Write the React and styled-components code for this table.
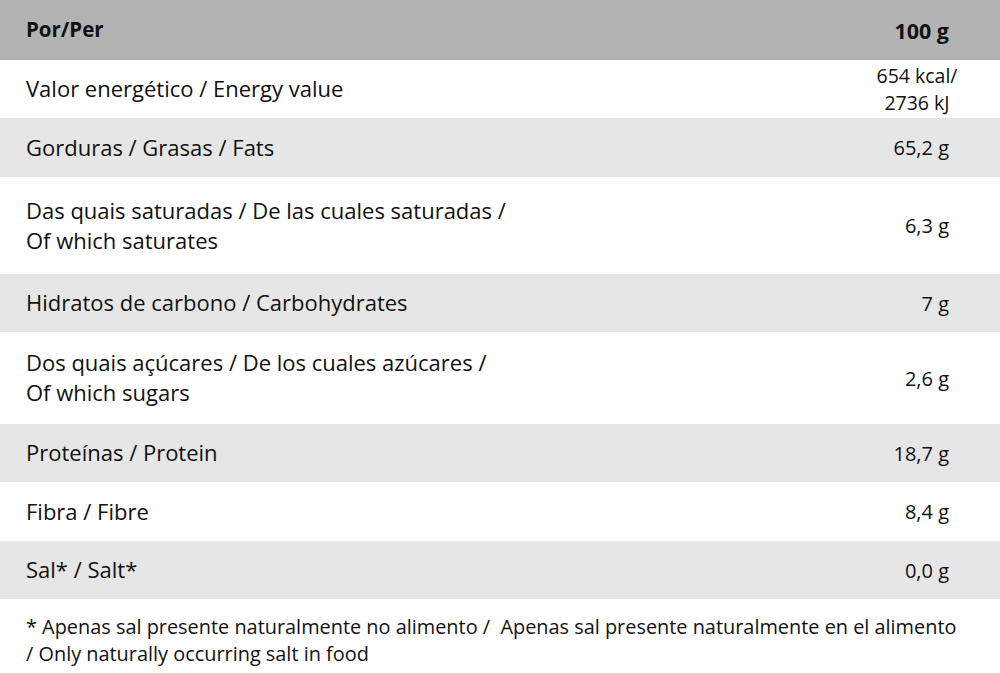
import React from "react";
import styled, { createGlobalStyle } from "styled-components";

const Global = createGlobalStyle`
  html, body { margin: 0; padding: 0; background: #fff; }
  body { font-family: "Open Sans", "Noto Sans", sans-serif; color: #111; }
`;

const Table = styled.div`
  width: 1000px;
  display: flex;
  flex-direction: column;
`;

const Row = styled.div`
  display: grid;
  grid-template-columns: 1fr 200px;
  align-items: center;
  height: ${(p) => p.$h}px;
  background: ${(p) => (p.$head ? "#b3b3b3" : p.$alt ? "#e6e6e6" : "#fff")};
  font-weight: ${(p) => (p.$head ? 700 : 400)};
`;

const Label = styled.div`
  padding-left: 26px;
  padding-bottom: 2px;
  line-height: 30px;
  font-size: ${(p) => (p.$head ? "20.5px" : "22px")};
`;

const Value = styled.div`
  text-align: right;
  padding-right: 51px;
  font-size: ${(p) => (p.$head ? "21.5px" : "20px")};
  line-height: 27px;
`;

const Energy = styled(Value)`
  text-align: center;
  padding-right: 0;
  padding-left: 34px;
  font-size: 19.5px;
`;

const Note = styled.div`
  padding: 14px 26px 0;
  font-size: 19.9px;
  line-height: 27px;
  white-space: nowrap;
`;

const rows = [
  { l: "Valor energético / Energy value", v: "energy", h: 58 },
  { l: "Gorduras / Grasas / Fats", v: "65,2 g", h: 59, alt: true },
  { l: ["Das quais saturadas / De las cuales saturadas /", "Of which saturates"], v: "6,3 g", h: 97 },
  { l: "Hidratos de carbono / Carbohydrates", v: "7 g", h: 58, alt: true },
  { l: ["Dos quais açúcares / De los cuales azúcares /", "Of which sugars"], v: "2,6 g", h: 92 },
  { l: "Proteínas / Protein", v: "18,7 g", h: 58, alt: true },
  { l: "Fibra / Fibre", v: "8,4 g", h: 59 },
  { l: "Sal* / Salt*", v: "0,0 g", h: 58, alt: true },
];

export default function App() {
  return (
    <>
      <Global />
      <Table>
        <Row $head $h={60}>
          <Label $head>Por/Per</Label>
          <Value $head>100 g</Value>
        </Row>
        {rows.map((r, i) => (
          <Row key={i} $h={r.h} $alt={r.alt}>
            <Label>
              {Array.isArray(r.l) ? (
                <>
                  {r.l[0]}
                  <br />
                  {r.l[1]}
                </>
              ) : (
                r.l
              )}
            </Label>
            {r.v === "energy" ? (
              <Energy>
                654 kcal/
                <br />
                2736 kJ
              </Energy>
            ) : (
              <Value>{r.v}</Value>
            )}
          </Row>
        ))}
        <Note>
          * Apenas sal presente naturalmente no alimento /&nbsp; Apenas sal presente naturalmente en el alimento
          <br />/ Only naturally occurring salt in food
        </Note>
      </Table>
    </>
  );
}
